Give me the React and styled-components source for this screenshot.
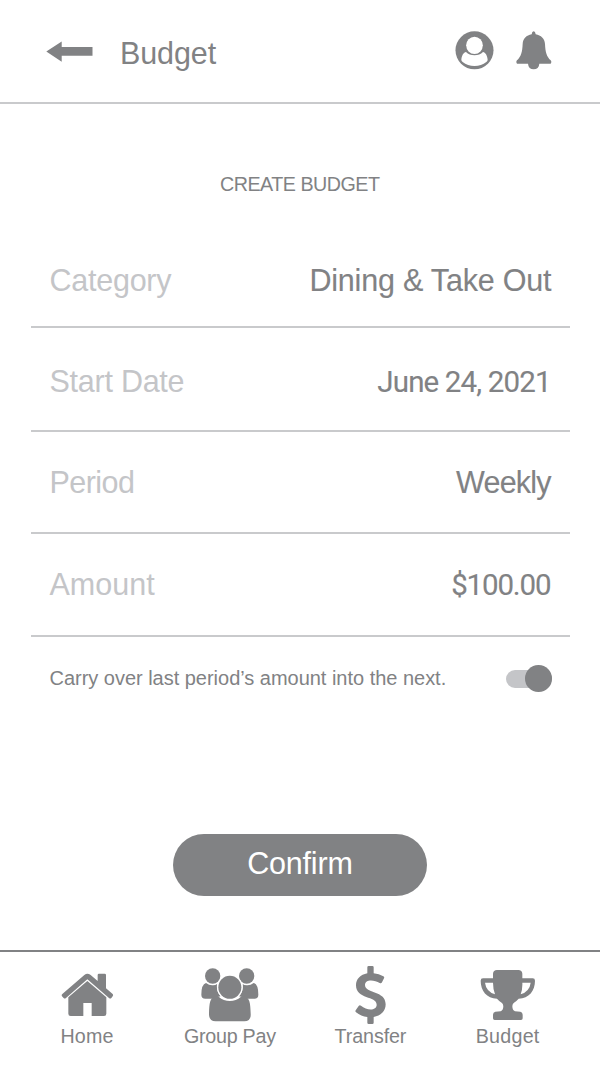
import React from "react";
import styled, { createGlobalStyle } from "styled-components";

const ink = "#818284";
const pale = "#c4c5c8";
const rule = "#c9cacc";

const GlobalStyle = createGlobalStyle`
  * { box-sizing: border-box; }
  body { margin: 0; background: #fff; }
`;

const Screen = styled.div`
  display: flex;
  flex-direction: column;
  width: 600px;
  height: 1066px;
  overflow: hidden;
  background: #fff;
  color: ${ink};
  font-family: "Liberation Sans", Arial, sans-serif;
`;

const Header = styled.header`
  display: flex;
  align-items: flex-start;
  height: 104px;
  padding: 30px 48px 0 46px;
  border-bottom: 2px solid ${rule};
`;

const BackButton = styled.button`
  display: flex;
  padding: 11px 0 0;
  border: 0;
  background: none;
  color: inherit;
`;

const Label = styled.span`
  font-size: ${(p) => p.$size || 30.5}px;
  line-height: ${(p) => (p.$size ? 24 : 36)}px;
  letter-spacing: ${(p) => p.$track || 0}px;
  margin-right: ${(p) => -(p.$track || 0)}px;
  color: ${(p) => (p.$pale ? pale : "inherit")};
  white-space: nowrap;
  font-weight: 400;
`;

const Value = styled(Label)`
  -webkit-text-stroke: 0.12px ${ink};
`;

const NumericValue = styled(Value)`
  font-family: Roboto, "Liberation Sans", sans-serif;
  font-size: 29.5px;
  line-height: 34px;
`;

const Title = styled.h1`
  flex: 1;
  display: flex;
  margin: 5px 0 0 27px;
`;

const HeaderIcons = styled.div`
  display: flex;
  gap: 22px;
`;

const Icon = styled.svg`
  display: block;
  flex: none;
  fill: ${ink};
`;

const Main = styled.main`
  flex: 1;
  display: flex;
  flex-direction: column;
  align-items: center;
`;

const Heading = styled.h2`
  display: flex;
  margin: 68px 0 0;
  height: 24px;
`;

const Form = styled.section`
  width: 539px;
  margin-top: 30px;
`;

const Row = styled.div`
  display: flex;
  align-items: flex-end;
  justify-content: space-between;
  height: ${(p) => p.$height}px;
  padding: 0 18px ${(p) => p.$drop}px 19px;
  border-bottom: 2px solid ${rule};
`;

const CarryOver = styled.div`
  display: flex;
  align-items: center;
  justify-content: space-between;
  height: 27px;
  margin: 28px 18px 0 19px;
`;

const Note = styled(Label)`
  padding-bottom: 2px;
`;

const Track = styled.span`
  display: flex;
  align-items: center;
  justify-content: flex-end;
  width: 46px;
  height: 18px;
  border-radius: 9px;
  background: ${pale};
`;

const Knob = styled.span`
  width: 26.6px;
  height: 26.6px;
  flex: none;
  border-radius: 50%;
  background: ${ink};
`;

const Confirm = styled.button`
  display: flex;
  justify-content: center;
  width: 254px;
  height: 62px;
  margin-top: 142px;
  padding: 11px 0 0;
  border: 0;
  border-radius: 31px;
  background: ${ink};
  color: #fff;
  font-family: inherit;
`;

const Nav = styled.nav`
  display: grid;
  grid-template-columns: 158px 128px 153px 121px;
  padding-left: 8px;
  height: 116px;
  border-top: 2px solid ${ink};
`;

const NavItem = styled.a`
  display: flex;
  flex-direction: column;
  align-items: center;
`;

const IconSlot = styled.span`
  display: flex;
  align-items: flex-end;
  height: ${(p) => p.$bottom}px;
  margin-bottom: ${(p) => 72 - p.$bottom}px;
`;

const fields = [
  { name: "Category", nameTrack: -0.25, value: "Dining & Take Out", valueTrack: -0.2, height: 102, drop: 28 },
  { name: "Start Date", nameTrack: -0.25, value: "June 24, 2021", valueTrack: -0.85, numeric: true, height: 104, drop: 31 },
  { name: "Period", nameTrack: -0.55, value: "Weekly", valueTrack: -0.8, height: 102, drop: 32 },
  { name: "Amount", nameTrack: 0, value: "$100.00", valueTrack: -1.15, numeric: true, height: 103, drop: 33 },
];

const ArrowIcon = () => (
  <Icon width="47" height="21" viewBox="0 0 47 21">
    <path d="M.3 10.5 15.7.4V6H46.5V14.8H15.7V20.7Z" />
  </Icon>
);

const UserIcon = () => (
  <Icon width="39" height="40" viewBox="44 30 117 120">
    <circle cx="102.500" cy="91" r="57" />
    <g fill="#fff">
      <path d="M77 96C70 97 64 106 63 119Q63 123 67 126Q82 138 102.500 138Q123 138 138 126Q142 123 142 119C141 106 135 97 128 96Q118 106 102.500 106Q87 106 77 96Z" />
      <ellipse cx="102.500" cy="76" rx="28" ry="29" fill={ink} />
      <ellipse cx="102.500" cy="76" rx="25" ry="26" />
    </g>
  </Icon>
);

const BellIcon = () => (
  <Icon width="36" height="40" viewBox="229 30 108 120">
    <path d="M282 34Q287 34 288 43C304 46 315 56 316 72C317 96 321 110 333 121Q337 126 333 131H299C298 142 292 148 282 148C272 148 266 142 265 131H232Q228 126 232 121C244 110 248 96 249 72C250 56 260 46 276 43Q277 34 282 34Z" />
  </Icon>
);

const HomeIcon = () => (
  <Icon width="53" height="44" viewBox="62 99 159 132">
    <path d="M84 172 141 123 198 172V221Q198 228 191 228H154V189H129V228H91Q84 228 84 221Z" />
    <path d="M141 101Q146 101 151 105L172 123V105Q172 101 176 101H193Q197 101 197 105V145L217 162Q220 165 217 169L213 174Q210 177 206 174L141 118 77 174Q73 177 70 174L65 169Q62 165 66 162L132 105Q137 101 141 101Z" />
  </Icon>
);

const GroupIcon = () => (
  <Icon width="59" height="56" viewBox="483 82 177 168">
    <circle cx="518" cy="109" r="23" />
    <circle cx="620" cy="109" r="23" />
    <path d="M498 130Q508 138 519 137Q527 137 531 133Q528 154 542 170Q532 171 525 177H496Q484 177 484 165Q484 134 498 130Z" />
    <path d="M641 130Q631 138 620 137Q612 137 608 133Q611 154 597 170Q607 171 614 177H643Q655 177 655 165Q655 134 641 130Z" />
    <circle cx="569.500" cy="143" r="38.500" fill="#fff" />
    <path d="M536 171Q551 184 569.500 184Q588 184 603 171C630 167 631 190 632 221Q634 245 613 245H527Q506 245 507 221C508 190 509 167 536 171Z" />
    <circle cx="569.500" cy="143" r="34.500" />
  </Icon>
);

const DollarIcon = () => (
  <Icon width="34" height="60" viewBox="132 75 102 180">
    <path d="M176 78H187Q191 78 191 82V100Q207 102 220 109Q224 111 222 115L216 127Q214 131 209 129C193 119 165 117 165 135C165 161 227 151 227 193C227 214 212 228 191 231V248Q191 252 187 252H176Q172 252 172 248V231Q153 229 138 217Q135 214 137 211L146 198Q149 194 153 197C170 212 200 213 200 194C200 168 138 178 138 136C138 117 151 104 172 100V82Q172 78 176 78Z" />
  </Icon>
);

const TrophyIcon = () => (
  <Icon width="55" height="52" viewBox="509 87 165 156">
    <path
      fillRule="evenodd"
      d="M560 90H624Q635 90 636 101V115H667Q674 115 674 122C674 151 656 176 625 176Q619 183 611 188C604 192 604 211 614 214L630 215Q637 217 637 224V235Q637 240 632 240H553Q548 240 548 235V224Q548 217 555 215L571 214C581 211 581 192 574 188Q566 183 560 176C529 176 511 151 511 122Q511 115 518 115H548V101Q549 90 560 90ZM524 128Q527 154 554 163Q548 147 548 128ZM636 128Q637 147 631 163Q658 154 661 128Z"
    />
  </Icon>
);

const tabs = [
  { label: "Home", track: 0.2, icon: <HomeIcon />, bottom: 65 },
  { label: "Group Pay", track: -0.25, icon: <GroupIcon />, bottom: 71 },
  { label: "Transfer", track: -0.1, icon: <DollarIcon />, bottom: 73 },
  { label: "Budget", track: 0.25, icon: <TrophyIcon />, bottom: 69 },
];

export default function App() {
  return (
    <Screen>
      <GlobalStyle />
      <Header>
        <BackButton aria-label="Back"><ArrowIcon /></BackButton>
        <Title><Label $track={-0.1}>Budget</Label></Title>
        <HeaderIcons>
          <UserIcon />
          <BellIcon />
        </HeaderIcons>
      </Header>
      <Main>
        <Heading><Label $size={19.7} $track={-0.5}>CREATE BUDGET</Label></Heading>
        <Form>
          {fields.map((f) => (
            <Row key={f.name} $height={f.height} $drop={f.drop}>
              <Label $pale $track={f.nameTrack}>{f.name}</Label>
              {f.numeric ? (
                <NumericValue $track={f.valueTrack}>{f.value}</NumericValue>
              ) : (
                <Value $track={f.valueTrack}>{f.value}</Value>
              )}
            </Row>
          ))}
          <CarryOver>
            <Note $size={20} $track={-0.02}>Carry over last period’s amount into the next.</Note>
            <Track><Knob /></Track>
          </CarryOver>
        </Form>
        <Confirm><Label $track={-0.2}>Confirm</Label></Confirm>
      </Main>
      <Nav>
        {tabs.map((t) => (
          <NavItem key={t.label}>
            <IconSlot $bottom={t.bottom}>{t.icon}</IconSlot>
            <Label $size={19.7} $track={t.track}>{t.label}</Label>
          </NavItem>
        ))}
      </Nav>
    </Screen>
  );
}
